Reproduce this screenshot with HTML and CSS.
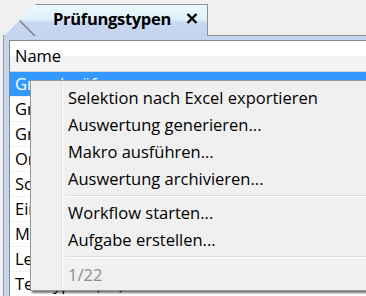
FILE: index.html
```html
<!DOCTYPE html>
<html>
<head lang="de">
    <meta charset="UTF-8">
    <title>Prüfungstypen</title>
    <link rel="stylesheet" href="styles.css">
</head>
<body>
<div class="strip">
    <div class="tab">
        <span class="tab-title">Prüfungstypen</span>
        <svg class="tab-close" width="12" height="11" viewBox="0 0 12 11">
            <path d="M1.5 1 L10.5 10 M10.5 1 L1.5 10" stroke="#000" stroke-width="2.4"/>
        </svg>
    </div>
</div>
<div class="frame">
    <div class="list">
        <div class="list-head">Name</div>
        <div class="row selected">Grundprüfung</div>
        <div class="row">Grenzwertprüfung</div>
        <div class="row">Gravurprüfung</div>
        <div class="row">Ordnungsprüfung</div>
        <div class="row">Sonderprüfung</div>
        <div class="row">Eingangsprüfung</div>
        <div class="row">Messprüfung</div>
        <div class="row">Lebensdauertest</div>
        <div class="row">Testtypen (12)</div>
    </div>
</div>
<ul class="menu">
    <li>Selektion nach Excel exportieren</li>
    <li>Auswertung generieren...</li>
    <li>Makro ausführen...</li>
    <li>Auswertung archivieren...</li>
    <li class="sep"></li>
    <li>Workflow starten...</li>
    <li>Aufgabe erstellen...</li>
    <li class="sep"></li>
    <li class="disabled">1/22</li>
</ul>
</body>
</html>
```

FILE: styles.css
```css
*{
    margin: 0;
    padding: 0;
    box-sizing: border-box;
}
ul{
    list-style: none;
}
body{
    width: 366px;
    height: 296px;
    overflow: hidden;
    background: #f0f0f0;
    font-family: "Open Sans", "Noto Sans", sans-serif;
    font-size: 16.5px;
    color: #000;
    position: relative;
}
.strip{
    height: 35px;
    padding-left: 4px;
    display: flex;
    align-items: flex-end;
}
.tab{
    width: 204px;
    height: 32px;
    margin-bottom: -1px;
    position: relative;
    z-index: 1;
    display: flex;
    align-items: center;
    padding: 0 9px 4px 49px;
    background: linear-gradient(#e9fafd 0, #e0f1fa 45%, #c8d7f1 58%, #c4d4ef 100%);
    border-top: 1px solid #8e8f8f;
    border-right: 1px solid #8e8f8f;
    clip-path: polygon(32px 0, 100% 0, 100% 100%, 0 100%);
}
.tab::before{
    content: "";
    position: absolute;
    left: 0;
    top: 0;
    width: 32px;
    height: 32px;
    background: linear-gradient(to top right, transparent 48%, #7a7a7a 49%, #7a7a7a 51%, transparent 52%);
}
.tab-title{
    font-weight: bold;
    font-size: 16.5px;
    letter-spacing: -0.3px;
}
.tab-close{
    margin-left: auto;
}
.frame{
    margin-left: 3px;
    height: 261px;
    border-left: 1px solid #9a9a9a;
    border-top: 1px solid #8e8f8f;
    background: #c5d4ef;
    padding: 4px 0 0 5px;
}
.list{
    height: 100%;
    background: #fff;
    border: 1px solid #828790;
    border-right: none;
    border-bottom: none;
}
.list-head{
    height: 31px;
    line-height: 30px;
    padding-left: 5px;
    background: linear-gradient(#fff 50%, #f3f4f6 50%);
    border-bottom: 1px solid #d5d5d5;
}
.row{
    height: 25px;
    line-height: 24px;
    padding-left: 5px;
    border-bottom: 1px solid #f0f0f0;
    white-space: nowrap;
}
.row.selected{
    background: #3399ff;
    color: #fff;
}
.menu{
    position: absolute;
    left: 30px;
    top: 80px;
    width: 380px;
    padding: 3px 2px;
    border: 1px solid #979797;
    background: #f0f0f0 linear-gradient(to right, transparent 30px, #e2e3e3 30px, #e2e3e3 31px, #fff 31px, #fff 32px, transparent 32px);
    box-shadow: 2px 2px 2px rgba(0, 0, 0, 0.55);
}
.menu li{
    height: 27px;
    line-height: 27px;
    padding-left: 35px;
    white-space: nowrap;
}
.menu li.sep{
    height: 7px;
    padding: 3px 0 0 32px;
}
.menu li.sep::after{
    content: "";
    display: block;
    border-top: 1px solid #dcdcdc;
    border-bottom: 1px solid #fff;
}
.menu li.disabled{
    color: #8d8d8d;
    line-height: 29px;
}
```
